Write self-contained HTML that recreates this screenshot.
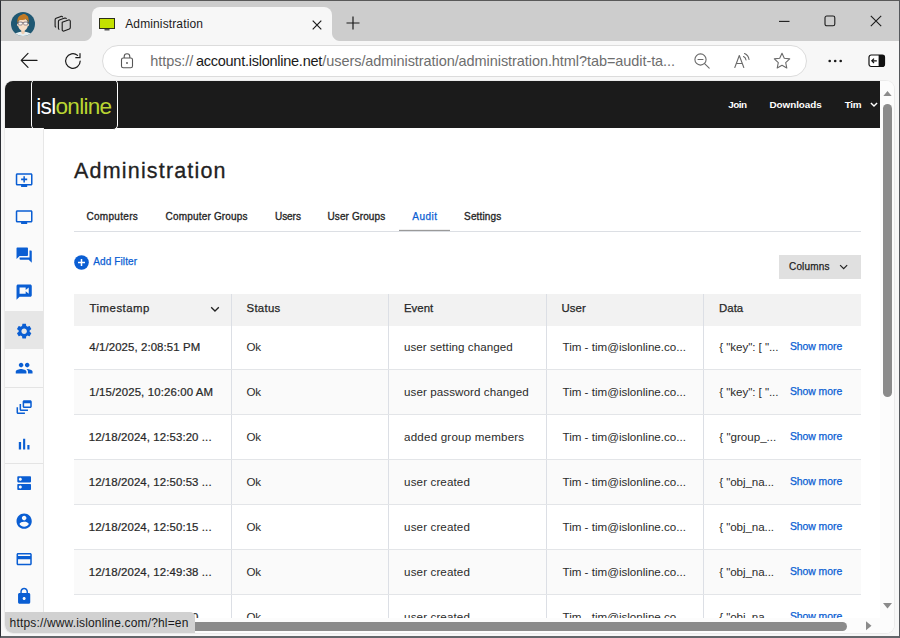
<!DOCTYPE html>
<html lang="en">
<head>
<meta charset="utf-8">
<title>Administration</title>
<style>
*{box-sizing:border-box;margin:0;padding:0}
html,body{width:900px;height:638px;overflow:hidden;background:#f7f7f7}
body{position:relative;font-family:"Liberation Sans",sans-serif;color:#1f1f1f}
.abs{position:absolute}
span{white-space:nowrap}
#win{position:absolute;left:0;top:0;width:900px;height:638px;background:#f7f7f7;overflow:hidden}
#frame{position:absolute;left:0;top:0;width:900px;height:638px;border-top:1px solid #595959;border-left:1px solid #2a2d33;border-right:1px solid #55585c;border-bottom:2px solid #63666a;pointer-events:none}
#titlebar{position:absolute;left:0;top:0;width:900px;height:41px;background:#cdcdcd}
#tab{position:absolute;left:92px;top:7px;width:240px;height:35px;background:#f7f7f7;border-radius:8px 8px 0 0}
#tab:before,#tab:after{content:"";position:absolute;bottom:1px;width:8px;height:8px;background:radial-gradient(circle at 0 0,rgba(247,247,247,0) 7.5px,#f7f7f7 8.5px)}
#tab:before{left:-8px}
#tab:after{right:-8px;transform:scaleX(-1)}
#tabtitle{position:absolute;left:124.5px;top:15.8px;font-size:12px;line-height:16px;color:#1b1b1b;white-space:nowrap}
#toolbar{position:absolute;left:0;top:41px;width:900px;height:40px;background:#f7f7f7}
#addr{position:absolute;left:102px;top:45px;width:705px;height:32px;border-radius:16px;background:#fff;border:1px solid #dcdcdc}
#url{position:absolute;left:150px;top:51px;font-size:14.5px;line-height:20px;color:#6e6e6e;white-space:nowrap}
#url .d{color:#1a1a1a}
#page{position:absolute;left:5px;top:81px;width:889px;height:552px;background:#fff;border-radius:8px;overflow:hidden;box-shadow:0 0 0 1px #ebebeb}
#hdr{position:absolute;left:0;top:0;width:875px;height:47px;background:#1b1b1b}
#logo{position:absolute;left:26px;top:-2px;width:87px;height:51px;border:1px solid #fff;border-radius:5px;background:#1b1b1b;font-size:22.6px;line-height:26px;white-space:nowrap}
#lg{position:absolute;left:5px;top:13.8px}
#logo .w{color:#fff}
#logo .g{color:#b9d532}
.nav{position:absolute;top:16.500px;font-size:9.9px;line-height:14px;font-weight:bold;color:#fff;white-space:nowrap}
#side{position:absolute;left:0;top:47px;width:39px;height:505px;background:#fafafa;border-right:1px solid #e7e7e7}
#side .act{position:absolute;left:0;top:183px;width:38px;height:38px;background:#e6e6e6}
#side .sep{position:absolute;left:0;width:38px;height:1px;background:#e4e4e4}
#side svg{position:absolute;left:9.8px;width:18.300px;height:18.300px;fill:#0a5ed3}
h1{position:absolute;left:67.5px;top:74.4px;font-size:21.5px;line-height:32px;font-weight:normal;color:#222;white-space:nowrap;-webkit-text-stroke:0.3px #222}
.tabs{position:absolute;left:69px;top:150px;width:787px;height:1px;background:#dcdfe4}
.tb{position:absolute;top:128.7px;font-size:10px;line-height:14px;color:#262626;white-space:nowrap;-webkit-text-stroke:0.32px #262626}
.tb.on{color:#0a5ed3;-webkit-text-stroke:0.25px #0a5ed3}
#tabul{position:absolute;left:394px;top:149px;width:51px;height:1px;background:#9a9a9a;box-shadow:0 -1px 0 rgba(150,150,150,.15)}
#addf{position:absolute;left:87px;top:174.2px;font-size:10px;line-height:14px;color:#0a5ed3;white-space:nowrap;-webkit-text-stroke:0.25px #0a5ed3}
#cols{position:absolute;left:774px;top:174px;width:82px;height:24px;background:#e0e0e0;font-size:10px;line-height:24px;color:#222;padding-left:9px;-webkit-text-stroke:0.25px #222}
#tbl{position:absolute;left:69px;top:213px;width:787px;height:400px}
.row{position:absolute;left:0;width:787px;height:45px;border-bottom:1px solid #e3e5e8;background:#fff}
.row.alt{background:#fafafa}
.row.head{height:32px;background:#f2f2f2;border-bottom:none}
.row.head .c{-webkit-text-stroke:0.25px #222;padding-top:0;padding-bottom:3.5px;font-size:11.4px}
.c{position:absolute;top:0;height:100%;font-size:11.6px;line-height:14px;white-space:nowrap;color:#2b2b2b;padding-left:14.500px;border-left:1px solid #dcdfe5;display:flex;align-items:center;padding-bottom:1px}
.c.c0{border-left:none;padding-left:14.500px;-webkit-text-stroke:0.22px #222;font-size:11.4px}
.sm{position:absolute;left:84.500px;color:#0a5ed3;font-size:10.4px;-webkit-text-stroke:0.25px #0a5ed3}
#vs{position:absolute;left:875px;top:0;width:14px;height:537px;background:#fcfcfc}
#vthumb{position:absolute;left:878px;top:23px;width:9px;height:293px;border-radius:4.500px;background:#8b8b8b}
#hs{position:absolute;left:0;top:537px;width:889px;height:15px;background:#fcfcfc}
#hthumb{position:absolute;left:16px;top:540.5px;width:826px;height:9px;border-radius:4.500px;background:#8b8b8b}
#status{position:absolute;left:5px;top:611.5px;width:190px;height:21.5px;background:#d1d1d1;border-radius:0 5px 0 8px;font-size:12px;line-height:22px;padding-left:5px;color:#1a1a1a;white-space:nowrap}
</style>
</head>
<body>
<div id="win">
<div id="titlebar"></div>
<svg class="abs" style="left:11px;top:12px" width="24" height="24" viewBox="0 0 24 24"><defs><clipPath id="av"><circle cx="12" cy="12" r="12"/></clipPath></defs><g clip-path="url(#av)"><rect width="24" height="24" fill="#1f5873"/><ellipse cx="12" cy="25" rx="9.500" ry="5.500" fill="#e6eef1"/><path d="M10.300 17h3.400v4.300l-1.700 1-1.700-1z" fill="#eecdb0"/><g transform="translate(0 -0.800)"><ellipse cx="12" cy="13.200" rx="5" ry="6.600" fill="#f7dfc8"/><ellipse cx="6.900" cy="13.600" rx=".9" ry="1.400" fill="#f2d3b8"/><ellipse cx="17.100" cy="13.600" rx=".9" ry="1.400" fill="#f2d3b8"/><path d="M6.500 12.200c-.8-5.200 1.600-8.200 4.800-9 1.500-.7 3.400 0 3.800.7 2.300.8 3 4 2.400 8.300-.5-2.200-1.300-3.600-2.300-4.300-2.300 1.300-5.500.7-7.400 1.500-.6.700-1 1.600-1.300 2.800z" fill="#c17a25"/><g transform="translate(0 -0.600)"><path d="M6.600 11.900h10.800" stroke="#4a4456" stroke-width=".5" fill="none"/><rect x="7.400" y="11.400" width="4" height="3" rx="1.200" fill="#fff" fill-opacity=".75" stroke="#4a4456" stroke-width=".55"/><rect x="12.600" y="11.400" width="4" height="3" rx="1.200" fill="#fff" fill-opacity=".75" stroke="#4a4456" stroke-width=".55"/></g></g></g></svg>
<svg class="abs" style="left:54px;top:15px" width="18" height="18" viewBox="0 0 18 18" fill="none" stroke="#1b1b1b" stroke-width="1.100" stroke-linejoin="round" stroke-linecap="round"><path d="M8.200 7.300l6.300-2.300c.9-.3 1.800.3 1.800 1.300v6.200c0 .7-.4 1.200-1 1.500l-5.300 2c-.9.300-1.800-.3-1.800-1.300z"/><path d="M12.300 3.600c-.3-.5-.9-.7-1.600-.5L5.400 5.100c-.6.300-1 .8-1 1.500v6.600c0 .5.200.9.600 1.100"/><path d="M8.500 1.900c-.3-.5-.9-.7-1.600-.5L2.100 3.200c-.6.300-1 .8-1 1.500v6.300c0 .5.200.9.600 1.100"/></svg>
<div id="tab"></div>
<svg class="abs" style="left:99px;top:18px" width="16" height="13" viewBox="0 0 16 13"><rect x=".5" y=".5" width="15" height="10" fill="#c3e100" stroke="#2c2f1a" stroke-width="1"/><rect x="5.500" y="11" width="5" height="1.500" fill="#555"/></svg>
<div id="tabtitle"><span id="tt" style="letter-spacing:0.13px;position:relative;left:0.70px">Administration</span></div>
<svg class="abs" style="left:312px;top:20px" width="10" height="10" viewBox="0 0 10 10"><path d="M.7.700l8.600 8.600M9.300.700L.700 9.300" stroke="#1b1b1b" stroke-width="1.200"/></svg>
<svg class="abs" style="left:346px;top:16px" width="14" height="14" viewBox="0 0 14 14"><path d="M7 .5v13M.5 7h13" stroke="#1b1b1b" stroke-width="1.200"/></svg>
<svg class="abs" style="left:779px;top:20px" width="11" height="3" viewBox="0 0 11 3"><path d="M0 1.400h10.500" stroke="#1b1b1b" stroke-width="1.100"/></svg>
<svg class="abs" style="left:824px;top:15px" width="12" height="12" viewBox="0 0 12 12"><rect x="1" y="1" width="9.800" height="9.800" rx="1.800" fill="none" stroke="#1b1b1b" stroke-width="1.100"/></svg>
<svg class="abs" style="left:870px;top:15px" width="12" height="12" viewBox="0 0 12 12"><path d="M.8.800l10.400 10.400M11.200.800L.800 11.200" stroke="#1b1b1b" stroke-width="1.100"/></svg>
<div id="toolbar"></div>
<svg class="abs" style="left:20px;top:52px" width="18" height="17" viewBox="0 0 18 17" fill="none" stroke="#1b1b1b" stroke-width="1.200" stroke-linecap="round" stroke-linejoin="round"><path d="M8 1.400L1.200 8.400 8 15.400M1.500 8.400H17"/></svg>
<svg class="abs" style="left:64px;top:52px" width="18" height="18" viewBox="0 0 18 18" fill="none" stroke="#1b1b1b" stroke-width="1.200" stroke-linecap="round" stroke-linejoin="round"><path d="M16.200 9a7.300 7.300 0 1 1-2.600-5.600M16 1.500v4.200h-4.200"/></svg>
<div id="addr"></div>
<svg class="abs" style="left:120px;top:53px" width="14" height="16" viewBox="0 0 14 16" fill="none" stroke="#555" stroke-width="1.100"><rect x="1.500" y="5" width="11" height="9.800" rx="1.800"/><path d="M4.200 5V3.600a2.800 2.800 0 0 1 5.600 0V5"/><circle cx="7" cy="10" r=".9" fill="#555" stroke="none"/></svg>
<div id="url"><span id="u1" style="letter-spacing:-0.08px;position:relative;left:0.30px">https://</span><span id="u2" style="letter-spacing:-0.25px;position:relative;left:3.00px" class="d">account.islonline.net</span><span id="u3" style="letter-spacing:-0.07px;position:relative;left:3.30px">/users/administration/administration.html?tab=audit-ta...</span></div>
<svg class="abs" style="left:693px;top:52px" width="18" height="18" viewBox="0 0 18 18" fill="none" stroke="#6a6a6a" stroke-width="1.100" stroke-linecap="round"><circle cx="7.500" cy="7.500" r="5.600"/><path d="M11.600 11.600l4.600 4.600M5 7.500h5"/></svg>
<svg class="abs" style="left:733px;top:52px" width="19" height="17" viewBox="0 0 19 17" fill="none" stroke="#6a6a6a" stroke-width="1.100" stroke-linecap="round" stroke-linejoin="round"><path d="M1.800 15.500L6.300 3.500l4.500 12M3.300 11.500h6"/><path d="M10.500 4.500a4.500 4.500 0 0 1 2.500 3.500M11.500 1.500a7.500 7.500 0 0 1 4.500 6"/></svg>
<svg class="abs" style="left:773px;top:52px" width="18" height="18" viewBox="0 0 18 18" fill="none" stroke="#6a6a6a" stroke-width="1.100" stroke-linejoin="round"><path d="M9 1.300l2.300 5 5.400.6-4 3.700 1.100 5.400L9 13.300 4.200 16l1.100-5.400-4-3.700 5.400-.6z"/></svg>
<svg class="abs" style="left:828px;top:59px" width="15" height="4" viewBox="0 0 15 4" fill="#1b1b1b"><circle cx="1.700" cy="2" r="1.300"/><circle cx="7.200" cy="2" r="1.300"/><circle cx="12.700" cy="2" r="1.300"/></svg>
<svg class="abs" style="left:868px;top:54px" width="18" height="14" viewBox="0 0 18 14"><rect x="1" y="1" width="15.500" height="11.500" rx="2.200" fill="#fff" stroke="#111" stroke-width="1.200"/><path d="M10.600 1h3.900a2.200 2.200 0 0 1 2.200 2.200v7.100a2.200 2.200 0 0 1-2.200 2.200h-3.900z" fill="#111"/><path d="M8.800 6.800H4M6 4.600L3.800 6.800 6 9" fill="none" stroke="#111" stroke-width="1.200"/></svg>
<div id="page">
 <div id="hdr"></div>
 <div id="logo"><span id="lg" style="letter-spacing:-0.72px;position:relative;left:4.30px"><span class="w">isl</span><span class="g">online</span></span></div>
 <div class="nav" style="left:723.5px"><span id="n1" style="letter-spacing:-0.54px;position:relative;left:-0.20px">Join</span></div>
 <div class="nav" style="left:764.5px"><span id="n2" style="letter-spacing:-0.05px;position:relative;left:0.00px">Downloads</span></div>
 <div class="nav" style="left:839px"><span id="n3" style="letter-spacing:-0.30px;position:relative;left:0.80px">Tim</span></div>
 <svg class="abs" style="left:864.5px;top:20.5px" width="8" height="5.300" viewBox="0 0 9 6"><path d="M1 1l3.5 3.5L8 1" fill="none" stroke="#fff" stroke-width="1.6"/></svg>
 <div id="side"><div class="act"></div><div class="sep" style="top:259px"></div><div class="sep" style="top:335px"></div>
  <svg viewBox="0 0 24 24" style="top:42.85px"><path d="M21 3H3c-1.11 0-2 .89-2 2v12c0 1.1.89 2 2 2h5v2h8v-2h5c1.1 0 1.99-.9 1.99-2L23 5c0-1.11-.9-2-2-2zm0 14H3V5h18v12zm-5-7v2h-3v3h-2v-3H8v-2h3V7h2v3h3z"/></svg>
  <svg viewBox="0 0 24 24" style="top:80.35px"><path d="M21 3H3c-1.1 0-2 .9-2 2v12c0 1.1.9 2 2 2h5v2h8v-2h5c1.1 0 1.99-.9 1.99-2L23 5c0-1.1-.9-2-2-2zm0 14H3V5h18v12z"/></svg>
  <svg viewBox="0 0 24 24" style="top:117.85px"><path d="M21 6h-2v9H6v2c0 .55.45 1 1 1h11l4 4V7c0-.55-.45-1-1-1zm-4 6V3c0-.55-.45-1-1-1H3c-.55 0-1 .45-1 1v14l4-4h10c.55 0 1-.45 1-1z"/></svg>
  <svg viewBox="0 0 24 24" style="top:155.35px"><path d="M20 2H4c-1.1 0-1.99.9-1.99 2L2 22l4-4h14c1.1 0 2-.9 2-2V4c0-1.1-.9-2-2-2zm-2 12l-4-3.2V14H6V6h8v3.2L18 6v8z"/></svg>
  <svg viewBox="0 0 24 24" style="top:193.85px"><path d="M19.14 12.94c.04-.3.06-.61.06-.94 0-.32-.02-.64-.07-.94l2.03-1.58c.18-.14.23-.41.12-.61l-1.92-3.32c-.12-.22-.37-.29-.59-.22l-2.39.96c-.5-.38-1.03-.7-1.62-.94l-.36-2.54c-.04-.24-.24-.41-.48-.41h-3.84c-.24 0-.43.17-.47.41l-.36 2.54c-.59.24-1.13.57-1.62.94l-2.39-.96c-.22-.08-.47 0-.59.22L2.74 8.87c-.12.21-.08.47.12.61l2.03 1.58c-.05.3-.09.63-.09.94s.02.64.07.94l-2.03 1.58c-.18.14-.23.41-.12.61l1.92 3.32c.12.22.37.29.59.22l2.39-.96c.5.38 1.03.7 1.62.94l.36 2.54c.05.24.24.41.48.41h3.84c.24 0 .44-.17.47-.41l.36-2.54c.59-.24 1.13-.56 1.62-.94l2.39.96c.22.08.47 0 .59-.22l1.92-3.32c.12-.22.07-.47-.12-.61l-2.01-1.58zM12 15.6c-1.98 0-3.6-1.62-3.6-3.6s1.62-3.6 3.6-3.6 3.6 1.62 3.6 3.6-1.62 3.6-3.6 3.6z"/></svg>
  <svg viewBox="0 0 24 24" style="top:230.85px"><path d="M16 11c1.66 0 2.99-1.34 2.99-3S17.66 5 16 5c-1.66 0-3 1.34-3 3s1.34 3 3 3zm-8 0c1.66 0 2.99-1.34 2.99-3S9.66 5 8 5C6.34 5 5 6.34 5 8s1.34 3 3 3zm0 2c-2.33 0-7 1.17-7 3.5V19h14v-2.5c0-2.33-4.67-3.5-7-3.5zm8 0c-.29 0-.62.02-.97.05 1.16.84 1.97 1.97 1.97 3.45V19h6v-2.5c0-2.33-4.67-3.5-7-3.5z"/></svg>
  <svg viewBox="0 0 24 24" style="top:269.85px"><path d="M8 8H6v7c0 1.1.9 2 2 2h9v-2H8V8zM20 3h-8c-1.1 0-2 .9-2 2v6c0 1.1.9 2 2 2h8c1.1 0 2-.9 2-2V5c0-1.1-.9-2-2-2zm0 8h-8V7h8v4zM4 12H2v7c0 1.1.9 2 2 2h9v-2H4v-7z"/></svg>
  <svg viewBox="0 0 24 24" style="top:307.35px"><path d="M5 9.2h3V19H5zM10.6 5h2.8v14h-2.8zm5.6 8H19v6h-2.8z"/></svg>
  <svg viewBox="0 0 24 24" style="top:345.85px"><path d="M20 13H4c-.55 0-1 .45-1 1v6c0 .55.45 1 1 1h16c.55 0 1-.45 1-1v-6c0-.55-.45-1-1-1zM7 19c-1.1 0-2-.9-2-2s.9-2 2-2 2 .9 2 2-.9 2-2 2zM20 3H4c-.55 0-1 .45-1 1v6c0 .55.45 1 1 1h16c.55 0 1-.45 1-1V4c0-.55-.45-1-1-1zM7 9c-1.1 0-2-.9-2-2s.9-2 2-2 2 .9 2 2-.9 2-2 2z"/></svg>
  <svg viewBox="0 0 24 24" style="top:383.85px"><path d="M12 2C6.48 2 2 6.48 2 12s4.48 10 10 10 10-4.48 10-10S17.52 2 12 2zm0 3c1.66 0 3 1.34 3 3s-1.34 3-3 3-3-1.34-3-3 1.34-3 3-3zm0 14.2c-2.5 0-4.71-1.28-6-3.22.03-1.99 4-3.08 6-3.08 1.99 0 5.97 1.09 6 3.08-1.29 1.94-3.5 3.22-6 3.22z"/></svg>
  <svg viewBox="0 0 24 24" style="top:421.85px"><path d="M20 4H4c-1.11 0-1.99.89-1.99 2L2 18c0 1.11.89 2 2 2h16c1.11 0 2-.89 2-2V6c0-1.11-.89-2-2-2zm0 14H4v-6h16v6zm0-10H4V6h16v2z"/></svg>
  <svg viewBox="0 0 24 24" style="top:459.35px"><path d="M18 8h-1V6c0-2.76-2.24-5-5-5S7 3.24 7 6v2H6c-1.1 0-2 .9-2 2v10c0 1.1.9 2 2 2h12c1.1 0 2-.9 2-2V10c0-1.1-.9-2-2-2zm-6 9c-1.1 0-2-.9-2-2s.9-2 2-2 2 .9 2 2-.9 2-2 2zm3.1-9H8.9V6c0-1.71 1.39-3.1 3.1-3.1 1.71 0 3.1 1.39 3.1 3.1v2z"/></svg>
 </div>
 <h1><span id="h1" style="letter-spacing:1.17px;position:relative;left:1.60px">Administration</span></h1>
 <div class="tabs"></div>
 <div class="tb" style="left:81.0px"><span id="t1" style="letter-spacing:0.31px;position:relative;left:0.40px">Computers</span></div>
 <div class="tb" style="left:159.4px"><span id="t2" style="letter-spacing:0.18px;position:relative;left:1.20px">Computer Groups</span></div>
 <div class="tb" style="left:269.2px"><span id="t3" style="letter-spacing:-0.05px;position:relative;left:0.80px">Users</span></div>
 <div class="tb" style="left:321.7px"><span id="t4" style="letter-spacing:0.10px;position:relative;left:0.80px">User Groups</span></div>
 <div class="tb on" style="left:406.3px"><span id="t5" style="letter-spacing:0.50px;position:relative;left:1.00px">Audit</span></div>
 <div class="tb" style="left:457.9px"><span id="t6" style="letter-spacing:0.14px;position:relative;left:1.20px">Settings</span></div>
 <div id="tabul"></div>
 <svg class="abs" style="left:69px;top:174px" width="15" height="15" viewBox="0 0 15 15"><circle cx="7.5" cy="7.5" r="7.3" fill="#0a5ed3"/><path d="M7.5 4v7M4 7.500h7" stroke="#fff" stroke-width="1.5" fill="none"/></svg>
 <div id="addf"><span id="af" style="letter-spacing:0.11px;position:relative;left:1.30px">Add Filter</span></div>
 <div id="cols"><span id="cl" style="letter-spacing:0.17px;position:relative;left:1.00px">Columns</span><svg class="abs" style="left:60px;top:8.800px" width="9.300" height="6.500" viewBox="0 0 10 7"><path d="M1.2 1.2l3.8 3.8 3.800-3.800" fill="none" stroke="#222" stroke-width="1.300"/></svg></div>
 <div id="tbl">
  <div class="row head" style="top:0"><div class="c c0" style="left:0px;width:157px"><span id="hd0" style="letter-spacing:0.50px;position:relative;left:1.00px">Timestamp</span></div><div class="c c1" style="left:157px;width:157px"><span id="hd1" style="letter-spacing:0.28px;position:relative;left:0.00px">Status</span></div><div class="c c2" style="left:314px;width:158px"><span id="hd2" style="letter-spacing:0.05px;position:relative;left:0.40px">Event</span></div><div class="c c3" style="left:472px;width:157px"><span id="hd3" style="letter-spacing:0.07px;position:relative;left:0.00px">User</span></div><div class="c c4" style="left:629px;width:158px"><span id="hd4" style="letter-spacing:0.00px;position:relative;left:0.60px">Data</span></div><svg class="abs" style="left:135.500px;top:11.5px" width="10" height="7" viewBox="0 0 10 7"><path d="M1.2 1.2l3.8 3.8 3.800-3.800" fill="none" stroke="#222" stroke-width="1.300"/></svg></div>
  <div class="row" style="top:32px;height:44px"><div class="c c0" style="left:0px;width:157px"><span class="ts0" style="letter-spacing:0.10px;position:relative;left:0.80px">4/1/2025, 2:08:51 PM</span></div><div class="c" style="left:157px;width:157px"><span class="ok" style="letter-spacing:-0.20px;position:relative;left:0.00px">Ok</span></div><div class="c" style="left:314px;width:158px"><span class="ev0" style="letter-spacing:0.06px;position:relative;left:0.40px">user setting changed</span></div><div class="c" style="left:472px;width:157px"><span class="us" style="letter-spacing:0.00px;position:relative;left:1.00px">Tim - tim@islonline.co...</span></div><div class="c" style="left:629px;width:158px"><span class="da_a" style="letter-spacing:-0.06px;position:relative;left:0.80px">{ "key": [ "...</span><span class="sm"><span class="smt" style="letter-spacing:-0.03px;position:relative;left:1.40px">Show more</span></span></div></div>
  <div class="row alt" style="top:76px;height:45px"><div class="c c0" style="left:0px;width:157px"><span class="ts1" style="letter-spacing:0.14px;position:relative;left:0.70px">1/15/2025, 10:26:00 AM</span></div><div class="c" style="left:157px;width:157px"><span class="ok" style="letter-spacing:-0.20px;position:relative;left:0.00px">Ok</span></div><div class="c" style="left:314px;width:158px"><span class="ev1" style="letter-spacing:0.08px;position:relative;left:0.60px">user password changed</span></div><div class="c" style="left:472px;width:157px"><span class="us" style="letter-spacing:0.00px;position:relative;left:1.00px">Tim - tim@islonline.co...</span></div><div class="c" style="left:629px;width:158px"><span class="da_a" style="letter-spacing:-0.06px;position:relative;left:0.80px">{ "key": [ "...</span><span class="sm"><span class="smt" style="letter-spacing:-0.03px;position:relative;left:1.40px">Show more</span></span></div></div>
  <div class="row" style="top:121px;height:45px"><div class="c c0" style="left:0px;width:157px"><span class="ts2" style="letter-spacing:0.11px;position:relative;left:0.20px">12/18/2024, 12:53:20 ...</span></div><div class="c" style="left:157px;width:157px"><span class="ok" style="letter-spacing:-0.20px;position:relative;left:0.00px">Ok</span></div><div class="c" style="left:314px;width:158px"><span class="ev2" style="letter-spacing:0.19px;position:relative;left:0.60px">added group members</span></div><div class="c" style="left:472px;width:157px"><span class="us" style="letter-spacing:0.00px;position:relative;left:1.00px">Tim - tim@islonline.co...</span></div><div class="c" style="left:629px;width:158px"><span class="da_g" style="letter-spacing:0.00px;position:relative;left:0.80px">{ "group_...</span><span class="sm"><span class="smt" style="letter-spacing:-0.03px;position:relative;left:1.40px">Show more</span></span></div></div>
  <div class="row alt" style="top:166px;height:45px"><div class="c c0" style="left:0px;width:157px"><span class="ts2" style="letter-spacing:0.11px;position:relative;left:0.20px">12/18/2024, 12:50:53 ...</span></div><div class="c" style="left:157px;width:157px"><span class="ok" style="letter-spacing:-0.20px;position:relative;left:0.00px">Ok</span></div><div class="c" style="left:314px;width:158px"><span class="ev3" style="letter-spacing:0.12px;position:relative;left:0.60px">user created</span></div><div class="c" style="left:472px;width:157px"><span class="us" style="letter-spacing:0.00px;position:relative;left:1.00px">Tim - tim@islonline.co...</span></div><div class="c" style="left:629px;width:158px"><span class="da_o" style="letter-spacing:-0.09px;position:relative;left:0.80px">{ "obj_na...</span><span class="sm"><span class="smt" style="letter-spacing:-0.03px;position:relative;left:1.40px">Show more</span></span></div></div>
  <div class="row" style="top:211px;height:45px"><div class="c c0" style="left:0px;width:157px"><span class="ts2" style="letter-spacing:0.11px;position:relative;left:0.20px">12/18/2024, 12:50:15 ...</span></div><div class="c" style="left:157px;width:157px"><span class="ok" style="letter-spacing:-0.20px;position:relative;left:0.00px">Ok</span></div><div class="c" style="left:314px;width:158px"><span class="ev3" style="letter-spacing:0.12px;position:relative;left:0.60px">user created</span></div><div class="c" style="left:472px;width:157px"><span class="us" style="letter-spacing:0.00px;position:relative;left:1.00px">Tim - tim@islonline.co...</span></div><div class="c" style="left:629px;width:158px"><span class="da_o" style="letter-spacing:-0.09px;position:relative;left:0.80px">{ "obj_na...</span><span class="sm"><span class="smt" style="letter-spacing:-0.03px;position:relative;left:1.40px">Show more</span></span></div></div>
  <div class="row alt" style="top:256px;height:45px"><div class="c c0" style="left:0px;width:157px"><span class="ts2" style="letter-spacing:0.11px;position:relative;left:0.20px">12/18/2024, 12:49:38 ...</span></div><div class="c" style="left:157px;width:157px"><span class="ok" style="letter-spacing:-0.20px;position:relative;left:0.00px">Ok</span></div><div class="c" style="left:314px;width:158px"><span class="ev3" style="letter-spacing:0.12px;position:relative;left:0.60px">user created</span></div><div class="c" style="left:472px;width:157px"><span class="us" style="letter-spacing:0.00px;position:relative;left:1.00px">Tim - tim@islonline.co...</span></div><div class="c" style="left:629px;width:158px"><span class="da_o" style="letter-spacing:-0.09px;position:relative;left:0.80px">{ "obj_na...</span><span class="sm"><span class="smt" style="letter-spacing:-0.03px;position:relative;left:1.40px">Show more</span></span></div></div>
  <div class="row" style="top:301px;height:45px"><div class="c c0" style="left:0px;width:157px"><span class="ts2" style="letter-spacing:0.11px;position:relative;left:0.20px">12/18/2024, 12:49:10 ...</span></div><div class="c" style="left:157px;width:157px"><span class="ok" style="letter-spacing:-0.20px;position:relative;left:0.00px">Ok</span></div><div class="c" style="left:314px;width:158px"><span class="ev3" style="letter-spacing:0.12px;position:relative;left:0.60px">user created</span></div><div class="c" style="left:472px;width:157px"><span class="us" style="letter-spacing:0.00px;position:relative;left:1.00px">Tim - tim@islonline.co...</span></div><div class="c" style="left:629px;width:158px"><span class="da_o" style="letter-spacing:-0.09px;position:relative;left:0.80px">{ "obj_na...</span><span class="sm"><span class="smt" style="letter-spacing:-0.03px;position:relative;left:1.40px">Show more</span></span></div></div>
 </div>
 <div id="vs"></div><div id="vthumb"></div>
 <svg class="abs" style="left:878px;top:9.5px" width="9" height="5.500" viewBox="0 0 10 6"><path d="M0 6L5 0l5 6z" fill="#8b8b8b"/></svg>
 <svg class="abs" style="left:878px;top:522px" width="9" height="5.500" viewBox="0 0 10 6"><path d="M0 0L5 6l5-6z" fill="#8b8b8b"/></svg>
 <div id="hs"></div><div id="hthumb"></div>
 <svg class="abs" style="left:861px;top:540px" width="5.500" height="9.500" viewBox="0 0 6 10"><path d="M0 0L6 5l-6 5z" fill="#8b8b8b"/></svg>
</div>
<div id="status"><span id="st" style="letter-spacing:0.16px;position:relative;left:-0.40px">https://www.islonline.com/?hl=en</span></div>
<div id="frame"></div>
</div>
</body>
</html>
